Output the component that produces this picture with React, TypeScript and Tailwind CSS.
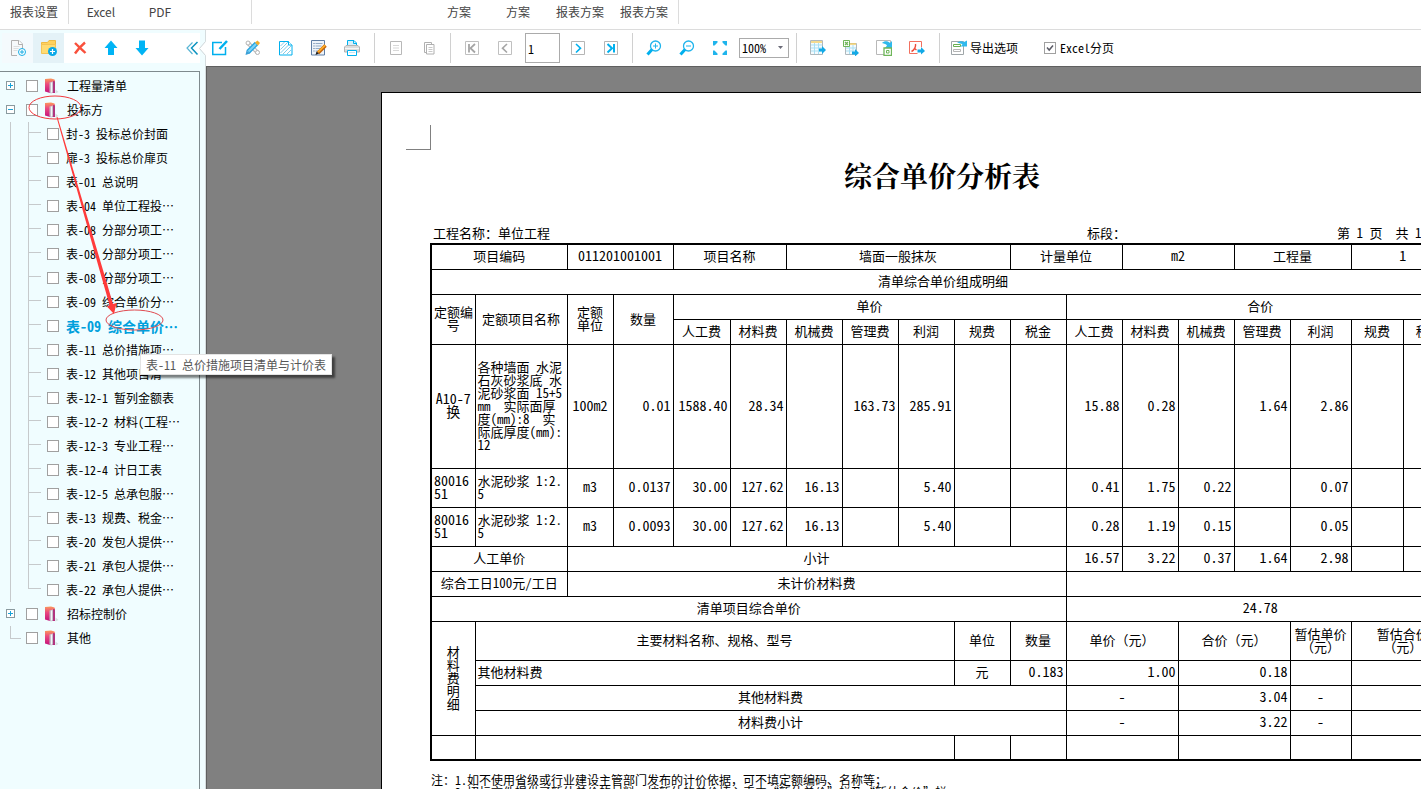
import { useState } from 'react'
import type { ReactNode } from 'react'
import { clsx } from 'clsx'

const sheets = [
  '封-3 投标总价封面',
  '扉-3 投标总价扉页',
  '表-01 总说明',
  '表-04 单位工程投⋯',
  '表-08 分部分项工⋯',
  '表-08 分部分项工⋯',
  '表-08 分部分项工⋯',
  '表-09 综合单价分⋯',
  '表-09 综合单价⋯',
  '表-11 总价措施项⋯',
  '表-12 其他项目清⋯',
  '表-12-1 暂列金额表',
  '表-12-2 材料(工程⋯',
  '表-12-3 专业工程⋯',
  '表-12-4 计日工表',
  '表-12-5 总承包服⋯',
  '表-13 规费、税金⋯',
  '表-20 发包人提供⋯',
  '表-21 承包人提供⋯',
  '表-22 承包人提供⋯',
]

const columns = [44, 92, 46, 60, 57, 56, 56, 56, 56, 56, 56, 56, 56, 56, 56, 61, 52, 52]

const feeNames = ['人工费', '材料费', '机械费', '管理费', '利润', '规费', '税金']

const quotaName = `各种墙面 水泥
石灰砂浆底 水
泥砂浆面 15+5
mm  实际面厚
度(mm):8  实
际底厚度(mm):
12`

/* ---------- icons ---------- */

function Icon({ children }: { children: ReactNode }) {
  return (
    <svg className="block size-4 shrink-0" viewBox="0 0 16 16" fill="none" aria-hidden="true">
      {children}
    </svg>
  )
}

const NewFileIcon = () => (
  <Icon>
    <path d="M1.500.5h7.500l3.500 3.500v5M7 15.500H1.500V.5" fill="#f8f8f8" stroke="#b0b0b0" />
    <path d="M8.500.5v4h4" fill="#fff" stroke="#b0b0b0" />
    <path d="M3.500 6.500h6M3.500 8.500h5M3.500 10.500h4" stroke="#dedede" />
    <circle cx="12" cy="12" r="3.500" fill="#fff" stroke="#1aaee5" />
    <path d="M12 10v4M10 12h4" stroke="#1aaee5" />
  </Icon>
)

const NewFolderIcon = () => (
  <Icon>
    <path d="M.5 13V2.500h6L8 .5h6.500V9" fill="#ffd25e" stroke="#eebb45" />
    <path d="M.5 13.500V4.500h14v9z" fill="#ffdc73" stroke="#f4c456" />
    <circle cx="11.500" cy="11.500" r="4.500" fill="#09a9e8" />
    <path d="M11.500 9v5M9 11.500h5" stroke="#fff" strokeWidth="1.200" />
  </Icon>
)

const DeleteIcon = () => (
  <Icon>
    <path d="M3 3c3 3 6.500 6 10.500 10M13 2.500C9.500 5.500 6 9 3 13.500" stroke="#f9503c" strokeWidth="2.400" />
  </Icon>
)

const UpIcon = () => (
  <Icon>
    <path d="M8 .5L14.500 8H11v7H5V8H1.500z" fill="#00b4f5" />
  </Icon>
)

const DownIcon = () => (
  <Icon>
    <path d="M8 15.500L1.500 8H5V.5h6V8h3.500z" fill="#00b4f5" />
  </Icon>
)

const CollapseIcon = () => (
  <Icon>
    <path d="M8.500 2.500L3 8l5.500 6" stroke="#59b5d4" strokeWidth="1.200" />
    <path d="M13.500 2L7.500 8l6 6.500" stroke="#0d93c0" strokeWidth="1.500" />
  </Icon>
)

const FolderIcon = () => (
  <Icon>
    <defs>
      <linearGradient id="cover" x1="0" y1="0" x2="0" y2="1">
        <stop offset="0" stopColor="#fb9a5c" />
        <stop offset="0.4" stopColor="#ea4a80" />
        <stop offset="1" stopColor="#c4127c" />
      </linearGradient>
    </defs>
    <path d="M0 1L6 .5l3.500 1L10 3v12H5L0 13.500z" fill="url(#cover)" />
    <path d="M4.500 4.500L8 3.500v11L6 15.500l-1.500-1z" fill="#c5c0cb" />
    <path d="M6.500 4.500v10" stroke="#f7f5f8" />
    <path d="M8 3l2 .5v11L8 15z" fill="#b0357f" />
    <path d="M10.500 11.500l3 2.500-3 1.500z" fill="#d5dee1" />
  </Icon>
)

const EditIcon = () => (
  <Icon>
    <path d="M10 2.500H.75V14.500H13.500V7" stroke="#00b0ee" strokeWidth="1.500" />
    <path d="M15 1L7.500 9" stroke="#00b0ee" strokeWidth="2.500" />
  </Icon>
)

const DesignIcon = () => (
  <Icon>
    <path d="M2.500 2.500l10.500 10.500" stroke="#b4b4b4" strokeWidth="4" />
    <path d="M3 3l9.500 9.500" stroke="#f4f4f4" strokeWidth="2" />
    <circle cx="3" cy="3" r="2" fill="#fff" stroke="#b4b4b4" />
    <circle cx="12.500" cy="12.500" r="2" fill="#fff" stroke="#b4b4b4" />
    <path d="M11.500 3.500L3 12" stroke="#2aa5e0" strokeWidth="4.600" />
    <path d="M11 4L3.500 11.500" stroke="#7fd2f5" strokeWidth="2" />
    <path d="M10 2.500L12.500.5l2.500 2.500-2 2.500z" fill="#f5ad2e" />
    <path d="M1.500 10.500L.5 15l4.500-1.500z" fill="#3b9fd6" />
  </Icon>
)

const HatchIcon = () => (
  <Icon>
    <path d="M1.500 1.500h9l3.500 3.500v10H1.500z" fill="#fff" stroke="#00b0ee" />
    <path d="M2.500 6l4-4M2.500 9.500L10 2M2.500 13l9-9M5 14l8-8M9 14l4-4" stroke="#83cdea" />
    <path d="M10.500 1.500v3.500h3.500" fill="#fff" stroke="#00b0ee" />
  </Icon>
)

const NoteIcon = () => (
  <Icon>
    <path d="M.5.5h13v14.500H.5z" fill="#eef4fa" stroke="#5f7ea5" />
    <path d="M2.500 3.500h1M2.500 6h1M2.500 8.500h1M2.500 11h1" stroke="#4f6d94" />
    <path d="M4.500 3.500h7M4.500 6h6M4.500 8.500h5M4.500 11h3" stroke="#93abc6" />
    <path d="M14.500 5.500L7 13" stroke="#c2620c" strokeWidth="3.500" />
    <path d="M14.300 5.200L7 12.200" stroke="#ffae27" strokeWidth="1.800" />
    <path d="M5.500 11.500l2.500 2L4.500 15z" fill="#222" />
  </Icon>
)

const PrintIcon = () => (
  <Icon>
    <path d="M3.500 6.500V.5h6.500l2.500 2.500v3.500" fill="#d7f1fb" stroke="#00b0ee" />
    <path d="M9.500.5v3h3" stroke="#00b0ee" />
    <path d="M2 5.500h12l1.500 1.500v5H.5V7z" fill="#dcdcdc" stroke="#b4b4b4" />
    <path d="M1 8.500h14" stroke="#f6f6f6" />
    <path d="M3.500 10.500h9v5h-9z" fill="#fff" stroke="#00b0ee" />
    <path d="M5 12.500h6" stroke="#bfe6f5" />
  </Icon>
)

const PageIcon = () => (
  <Icon>
    <path d="M2.500 1.500h11v13h-11z" fill="#fff" stroke="#b8b8b8" />
    <path d="M5 5.500h6M5 8h6M5 10.500h6" stroke="#d8d8d8" />
  </Icon>
)

const CopyIcon = () => (
  <Icon>
    <path d="M5.500 12.500h-2v-10h7v2" stroke="#b0b0b0" />
    <path d="M5.500 4.500h7.500v9.500H5.500z" fill="#fff" stroke="#b0b0b0" />
    <path d="M7.500 7.500h4M7.500 9.500h4M7.500 11.500h4" stroke="#c8c8c8" />
  </Icon>
)

const FirstIcon = () => (
  <Icon>
    <path d="M1.500 1.500h13v13h-13z" stroke="#c0c0c0" />
    <path d="M5 4v8.500" stroke="#a5a5a5" strokeWidth="1.800" />
    <path d="M11 4L6.500 8.200 11 12.500" stroke="#a5a5a5" strokeWidth="1.800" />
  </Icon>
)

const PrevIcon = () => (
  <Icon>
    <path d="M1.500 1.500h13v13h-13z" stroke="#c0c0c0" />
    <path d="M10 4L5.500 8.200 10 12.500" stroke="#a5a5a5" strokeWidth="1.600" />
  </Icon>
)

const NextIcon = () => (
  <Icon>
    <path d="M1.500 1.500h13v13h-13z" stroke="#b5b5b5" />
    <path d="M6 4l4.500 4.200L6 12.500" stroke="#00b0ee" strokeWidth="1.600" />
  </Icon>
)

const LastIcon = () => (
  <Icon>
    <path d="M1.500 1.500h13v13h-13z" stroke="#b5b5b5" />
    <path d="M4.500 4L9 8.200 4.500 12.500M11 4v8.500" stroke="#00b0ee" strokeWidth="2" />
  </Icon>
)

const ZoomInIcon = () => (
  <Icon>
    <circle cx="9.500" cy="6" r="5" stroke="#1fb4ec" strokeWidth="1.300" />
    <path d="M9.500 3.500v5M7 6h5" stroke="#1fb4ec" />
    <path d="M6 9.500L1.500 14.500" stroke="#00b0ee" strokeWidth="3" />
  </Icon>
)

const ZoomOutIcon = () => (
  <Icon>
    <circle cx="9.500" cy="6" r="5" stroke="#1fb4ec" strokeWidth="1.300" />
    <path d="M7 6h5" stroke="#1fb4ec" />
    <path d="M6 9.500L1.500 14.500" stroke="#00b0ee" strokeWidth="3" />
  </Icon>
)

const FitIcon = () => (
  <Icon>
    <path
      d="M1 1h4.500v1.500L2.500 5.500H1zM15 1h-4.500v1.500l3 3H15zM1 15h4.500v-1.500l-3-3H1zM15 15h-4.500v-1.500l3-3H15z"
      fill="#1fb4ec"
    />
  </Icon>
)

const ExportTableIcon = () => (
  <Icon>
    <path d="M.5.5h12v14H.5z" fill="#f4fbfe" stroke="#b0b8bc" />
    <path d="M1 2h11" stroke="#f5cf6a" strokeWidth="1.500" />
    <path d="M1 5h11M1 8h11M1 11h11M4.500 3v11M8.500 3v11" stroke="#a9dff3" />
    <path d="M9 8.500h3V6l4 4-4 4v-2.500H9z" fill="#12a9e6" />
  </Icon>
)

const ExportExcelIcon = () => (
  <Icon>
    <path d="M2.500 3.500h11v11h-11z" fill="#f4fbfe" stroke="#b0b8bc" />
    <path d="M7 4h6" stroke="#f5cf6a" strokeWidth="1.500" />
    <path d="M3 8h10M3 11h10M6.500 5v9M10 5v9" stroke="#a9dff3" />
    <path d="M.5.500h6v6h-6z" fill="#fff" stroke="#6fb65a" />
    <path d="M2 2l3 3M5 2L2 5" stroke="#6fb65a" strokeWidth="1.300" />
    <path d="M9 11.500h3V9l4 4-4 3.500V14.500H9z" fill="#12a9e6" />
  </Icon>
)

const ExportBatchIcon = () => (
  <Icon>
    <path d="M.5.500h14v14H.5z" fill="#fff" stroke="#b8b8b8" />
    <path d="M6 3c2-2.500 6-2.500 8 0l2-2v7H9l2-2.500C10 4 8.500 3.500 6 3z" fill="#2fb9ec" />
    <path d="M8 8h7.500v7.500H8z" fill="#fff" stroke="#6fb65a" strokeWidth="1.300" />
    <path d="M10.500 10.500h2.500v2.500h-2.500z" stroke="#6fb65a" />
  </Icon>
)

const ExportPdfIcon = () => (
  <Icon>
    <path d="M12.500 7V1.500H.5v12h8" stroke="#f2705f" />
    <path d="M2.500 11.500c3-1.500 4.500-5 4-7.500M5.500 8.500l2 1.500" stroke="#ee4b3a" strokeWidth="1.400" />
    <path d="M8.500 9.500h3.500V7l4 4-4 3.500V12.500H8.500z" fill="#12a9e6" />
  </Icon>
)

const ExportOptionsIcon = () => (
  <Icon>
    <path d="M.5 1.500h12v13H.5z" fill="#fff" stroke="#9fa6a9" />
    <path d="M2.500 4.500h7v2h-7z" stroke="#69ae52" />
    <path d="M2.500 9.500h7v2h-7z" stroke="#b5b5b5" />
    <path d="M6 3c2.500-2.500 5.500-2 7-1l3-1.500V6.500H9.500L11.500 4.500C10 3.500 8.500 3 6 3z" fill="#2fb9ec" />
  </Icon>
)

/* ---------- ribbon and toolbar ---------- */

function RibbonButton({ className, children }: { className: string; children: ReactNode }) {
  return <button className={clsx('h-6 text-center text-[12px] leading-6 text-[#444]', className)}>{children}</button>
}

function Ribbon() {
  return (
    <div className="flex h-[30px] shrink-0 items-start border-b border-[#dcdcdc] bg-white">
      <RibbonButton className="w-[68px]">报表设置</RibbonButton>
      <span className="h-6 w-px bg-[#dcdcdc]" />
      <RibbonButton className="w-16">Excel</RibbonButton>
      <RibbonButton className="w-[54px]">PDF</RibbonButton>
      <span className="ml-16 h-6 w-px bg-[#dcdcdc]" />
      <RibbonButton className="ml-[178px] w-[58px]">方案</RibbonButton>
      <RibbonButton className="w-[60px]">方案</RibbonButton>
      <RibbonButton className="w-16">报表方案</RibbonButton>
      <RibbonButton className="w-16">报表方案</RibbonButton>
      <span className="ml-0.5 h-6 w-px bg-[#dcdcdc]" />
    </div>
  )
}

function ToolButton({ label, children }: { label: string; children: ReactNode }) {
  return (
    <button aria-label={label} className="size-4 shrink-0">
      {children}
    </button>
  )
}

const Divider = () => <span className="h-[30px] w-px shrink-0 bg-[#d0d0d0]" />

function Toolbar() {
  const [page, setPage] = useState('1')
  const [paged, setPaged] = useState(true)

  return (
    <div className="flex h-9 shrink-0 items-center bg-white pl-1.5 [font-feature-settings:'hwid']">
      <div className="mr-3.5 flex gap-[17px]">
        <ToolButton label="编辑"><EditIcon /></ToolButton>
        <ToolButton label="设计"><DesignIcon /></ToolButton>
        <ToolButton label="背景"><HatchIcon /></ToolButton>
        <ToolButton label="备注"><NoteIcon /></ToolButton>
        <ToolButton label="打印"><PrintIcon /></ToolButton>
      </div>
      <Divider />
      <div className="mx-[13px] flex gap-[17px]">
        <ToolButton label="单页"><PageIcon /></ToolButton>
        <ToolButton label="多页"><CopyIcon /></ToolButton>
      </div>
      <Divider />
      <div className="mr-3 ml-[13px] flex items-center gap-[17px]">
        <ToolButton label="首页"><FirstIcon /></ToolButton>
        <ToolButton label="上一页"><PrevIcon /></ToolButton>
      </div>
      <input
        aria-label="页码"
        value={page}
        onChange={(e) => setPage(e.target.value)}
        className="h-[30px] w-[35px] border border-[#ababab] px-0.5 text-[12px] text-black"
      />
      <div className="mr-[13px] ml-2.5 flex gap-[17px]">
        <ToolButton label="下一页"><NextIcon /></ToolButton>
        <ToolButton label="末页"><LastIcon /></ToolButton>
      </div>
      <Divider />
      <div className="mr-[11px] ml-[13px] flex gap-[17px]">
        <ToolButton label="放大"><ZoomInIcon /></ToolButton>
        <ToolButton label="缩小"><ZoomOutIcon /></ToolButton>
        <ToolButton label="适应"><FitIcon /></ToolButton>
      </div>
      <div className="relative mr-[7px]">
        <select
          aria-label="缩放比例"
          className="block h-5 w-[50px] appearance-none border border-[#ababab] bg-white pl-0.5 text-[12px] text-black"
        >
          <option>100%</option>
        </select>
        <svg className="pointer-events-none absolute top-2 right-1.5" width="5" height="4" aria-hidden="true">
          <path d="M0 0h5L2.500 3z" fill="#6b6b78" />
        </svg>
      </div>
      <Divider />
      <div className="mr-3.5 ml-[13px] flex gap-[17px]">
        <ToolButton label="导出表格"><ExportTableIcon /></ToolButton>
        <ToolButton label="导出Excel"><ExportExcelIcon /></ToolButton>
        <ToolButton label="批量导出"><ExportBatchIcon /></ToolButton>
        <ToolButton label="导出PDF"><ExportPdfIcon /></ToolButton>
      </div>
      <Divider />
      <button className="ml-[11px] flex shrink-0 items-center gap-[3px] text-[12px] text-black">
        <ExportOptionsIcon />
        导出选项
      </button>
      <label className="ml-[26px] flex shrink-0 items-center gap-1 text-[12px] text-black">
        <span className="grid size-3 place-items-center">
          <input
            type="checkbox"
            checked={paged}
            onChange={() => setPaged(!paged)}
            className="col-start-1 row-start-1 size-3 appearance-none border border-[#a0a0a0] bg-white"
          />
          {paged && (
            <svg className="pointer-events-none col-start-1 row-start-1" width="8" height="8" fill="none">
              <path d="M1 3.500l2.200 2.500L7 1.500" stroke="#5b5b66" strokeWidth="1.500" />
            </svg>
          )}
        </span>
        Excel分页
      </label>
    </div>
  )
}

/* ---------- sidebar ---------- */

const Box = () => (
  <input type="checkbox" className="size-3 shrink-0 appearance-none border border-[#a0a0a0] bg-white" />
)

function RootRow({ name, state }: { name: string; state: 'open' | 'closed' | 'leaf' }) {
  return (
    <div className="flex h-6 items-center pl-1.5">
      {state === 'leaf' ? (
        <span className="mr-[5px] ml-1 h-6 w-[11px]">
          <span className="block h-[13px] border-b border-l border-[#c6cacc]" />
        </span>
      ) : (
        <button aria-label={name} className="mr-[11px] mb-0.5 size-[9px] bg-white outline outline-1 -outline-offset-1 outline-[#8a9a9f]">
          <svg className="block" width="9" height="9" aria-hidden="true">
            <path d={state === 'open' ? 'M2 4.500h5' : 'M2 4.500h5M4.500 2v5'} stroke="#1aa3d8" />
          </svg>
        </button>
      )}
      <label className="flex items-center text-[12px] leading-6 whitespace-nowrap text-black">
        <Box />
        <span className="mr-1.5 ml-[7px]">
          <FolderIcon />
        </span>
        {name}
      </label>
    </div>
  )
}

function SheetRow({ name, selected, last }: { name: string; selected: boolean; last: boolean }) {
  return (
    <li className="flex h-6 pl-2.5">
      <span className="w-[18px] shrink-0 border-l border-[#c6cacc]" />
      <span className="mr-1.5 w-[13px] shrink-0">
        <span className="block h-[11px] border-b border-l border-[#c6cacc]" />
        {!last && <span className="block h-[13px] border-l border-[#c6cacc]" />}
      </span>
      <label
        className={clsx(
          'flex items-center gap-[7px] leading-6 whitespace-nowrap',
          selected ? 'text-[14px] font-bold text-[#00a0dc]' : 'text-[12px] text-black',
        )}
      >
        <Box />
        {name}
      </label>
    </li>
  )
}

function Sidebar() {
  return (
    <aside className="relative flex w-[206px] shrink-0 flex-col border-r border-[#d5dcde] bg-[#f0fdff]">
      <div className="mt-[3px] mr-[5px] ml-0.5 flex h-[30px] shrink-0 items-center bg-white">
        <button aria-label="新建报表" className="grid h-full w-[31px] place-items-center bg-[#f4fafd]"><NewFileIcon /></button>
        <button aria-label="新建文件夹" className="grid h-full w-[31px] place-items-center bg-[#e4f2f7]"><NewFolderIcon /></button>
        <button aria-label="删除" className="grid h-full w-[31px] place-items-center"><DeleteIcon /></button>
        <button aria-label="上移" className="grid h-full w-[31px] place-items-center"><UpIcon /></button>
        <button aria-label="下移" className="grid h-full w-[31px] place-items-center"><DownIcon /></button>
        <button aria-label="收起" className="ml-auto h-4"><CollapseIcon /></button>
      </div>
      <svg className="absolute top-[11px] -right-px" width="7" height="15" aria-hidden="true">
        <path d="M7 0L.5 7.500 7 15z" fill="#fff" />
        <path d="M6.500.5L.5 7.500l6 7" fill="none" stroke="#cfd6d8" />
      </svg>
      <nav className="mt-2 mr-[5px] flex-1 border border-b-0 border-[#7f8a8e] pt-0.5 -ml-px [font-feature-settings:'hwid']">
        <RootRow name="工程量清单" state="closed" />
        <RootRow name="投标方" state="open" />
        <ul>
          {sheets.map((name, index) => (
            <SheetRow key={index} name={name} selected={index === 8} last={index === sheets.length - 1} />
          ))}
        </ul>
        <RootRow name="招标控制价" state="closed" />
        <RootRow name="其他" state="leaf" />
      </nav>
    </aside>
  )
}

/* ---------- report ---------- */

interface CellProps {
  span?: number;
  rows?: number;
  align?: 'left' | 'center' | 'right';
  num?: boolean;
  mixed?: boolean;
  children?: ReactNode;
}

function Cell({ span, rows, align = 'center', num, mixed, children }: CellProps) {
  return (
    <td
      colSpan={span}
      rowSpan={rows}
      className={clsx(
        'border border-black px-0.5 pt-0 pb-0.5 align-middle leading-[13px] whitespace-pre',
        align === 'left' && 'text-left',
        align === 'center' && 'text-center',
        align === 'right' && 'text-right',
        num ? 'text-[14px]' : 'text-[13px]',
        (num || mixed) && "[font-feature-settings:'hwid']",
      )}
    >
      {children}
    </td>
  )
}

function Amounts({ values }: { values: string[] }) {
  return (
    <>
      {values.map((value, index) => (
        <Cell key={index} align="right" num>{value}</Cell>
      ))}
    </>
  )
}

function AnalysisTable() {
  return (
    <table className="w-[1024px] table-fixed border-collapse border-2 border-black text-black">
      <colgroup>
        {columns.map((width, index) => (
          <col key={index} style={{ width }} />
        ))}
      </colgroup>
      <tbody>
        <tr className="h-[25px]">
          <Cell span={2}>项目编码</Cell>
          <Cell span={2} num>011201001001</Cell>
          <Cell span={2}>项目名称</Cell>
          <Cell span={4}>墙面一般抹灰</Cell>
          <Cell span={2}>计量单位</Cell>
          <Cell span={2} num>m2</Cell>
          <Cell span={2}>工程量</Cell>
          <Cell span={2} num>1</Cell>
        </tr>
        <tr className="h-[25px]">
          <Cell span={18}>清单综合单价组成明细</Cell>
        </tr>
        <tr className="h-[25px]">
          <Cell rows={2}>{'定额编\n号'}</Cell>
          <Cell rows={2}>定额项目名称</Cell>
          <Cell rows={2}>{'定额\n单位'}</Cell>
          <Cell rows={2}>数量</Cell>
          <Cell span={7}>单价</Cell>
          <Cell span={7}>合价</Cell>
        </tr>
        <tr className="h-[25px]">
          {[...feeNames, ...feeNames].map((name, index) => (
            <Cell key={index}>{name}</Cell>
          ))}
        </tr>
        <tr className="h-[124px]">
          <Cell num>{'A10-7\n换'}</Cell>
          <Cell align="left" mixed>{quotaName}</Cell>
          <Cell num>100m2</Cell>
          <Amounts values={['0.01', '1588.40', '28.34', '', '163.73', '285.91', '', '', '15.88', '0.28', '', '1.64', '2.86', '', '']} />
        </tr>
        <tr className="h-[39px]">
          <Cell align="left" num>{'80016\n51'}</Cell>
          <Cell align="left" mixed>{'水泥砂浆 1:2.\n5'}</Cell>
          <Cell num>m3</Cell>
          <Amounts values={['0.0137', '30.00', '127.62', '16.13', '', '5.40', '', '', '0.41', '1.75', '0.22', '', '0.07', '', '']} />
        </tr>
        <tr className="h-[39px]">
          <Cell align="left" num>{'80016\n51'}</Cell>
          <Cell align="left" mixed>{'水泥砂浆 1:2.\n5'}</Cell>
          <Cell num>m3</Cell>
          <Amounts values={['0.0093', '30.00', '127.62', '16.13', '', '5.40', '', '', '0.28', '1.19', '0.15', '', '0.05', '', '']} />
        </tr>
        <tr className="h-[25px]">
          <Cell span={2}>人工单价</Cell>
          <Cell span={9}>小计</Cell>
          <Amounts values={['16.57', '3.22', '0.37', '1.64', '2.98', '', '']} />
        </tr>
        <tr className="h-[25px]">
          <Cell span={2} mixed>综合工日100元/工日</Cell>
          <Cell span={9}>未计价材料费</Cell>
          <Cell span={7} />
        </tr>
        <tr className="h-[25px]">
          <Cell span={11}>清单项目综合单价</Cell>
          <Cell span={7} num>24.78</Cell>
        </tr>
        <tr className="h-[39px]">
          <Cell rows={4}>{'材\n料\n费\n明\n细'}</Cell>
          <Cell span={8}>主要材料名称、规格、型号</Cell>
          <Cell>单位</Cell>
          <Cell>数量</Cell>
          <Cell span={2}>单价（元）</Cell>
          <Cell span={2}>合价（元）</Cell>
          <Cell>{'暂估单价\n（元）'}</Cell>
          <Cell span={2}>{'暂估合价\n（元）'}</Cell>
        </tr>
        <tr className="h-[25px]">
          <Cell span={8} align="left">其他材料费</Cell>
          <Cell>元</Cell>
          <Cell align="right" num>0.183</Cell>
          <Cell span={2} align="right" num>1.00</Cell>
          <Cell span={2} align="right" num>0.18</Cell>
          <Cell />
          <Cell span={2} />
        </tr>
        <tr className="h-[25px]">
          <Cell span={10}>其他材料费</Cell>
          <Cell span={2} num>-</Cell>
          <Cell span={2} align="right" num>3.04</Cell>
          <Cell num>-</Cell>
          <Cell span={2} />
        </tr>
        <tr className="h-[25px]">
          <Cell span={10}>材料费小计</Cell>
          <Cell span={2} num>-</Cell>
          <Cell span={2} align="right" num>3.22</Cell>
          <Cell num>-</Cell>
          <Cell span={2} />
        </tr>
        <tr className="h-[25px]">
          <Cell />
          <Cell span={8} />
          <Cell />
          <Cell />
          <Cell span={2} />
          <Cell span={2} />
          <Cell />
          <Cell span={2} />
        </tr>
      </tbody>
    </table>
  )
}

function Report() {
  return (
    <div className="h-[1600px] w-[1124px] border border-black bg-white pt-8 pl-12 text-black">
      {/* margin corner mark */}
      <div className="-ml-6 h-[25px] w-[25px] border-r border-b border-[#808080]" />
      <h1 className="mt-[5px] w-[1024px] text-center font-['Noto_Serif_CJK_SC','Noto_Sans_CJK_SC',sans-serif] text-[28px] leading-10 font-bold">
        综合单价分析表
      </h1>
      <div className="mt-7 flex h-5 w-[1024px] items-center pl-[3px] text-[13px] leading-5 whitespace-pre">
        <span className="w-[654px]">工程名称：单位工程</span>
        <span className="w-[250px]">标段：</span>
        <span className="[font-feature-settings:'hwid']">第 1 页  共 1 页</span>
      </div>
      <AnalysisTable />
      <div className="mt-[13px] flex pl-px text-[12px] leading-[12px] whitespace-nowrap">
        <span>注：</span>
        <ol>
          <li>
            <span className="[font-feature-settings:'hwid']">1.</span>
            如不使用省级或行业建设主管部门发布的计价依据，可不填定额编码、名称等；
          </li>
          <li>
            <span className="[font-feature-settings:'hwid']">2.</span>
            招标文件提供了暂估单价的材料，按暂估的单价填入表内“暂估单价”栏及“暂估合价”栏。
          </li>
        </ol>
      </div>
    </div>
  )
}

/* red ellipses and the arrow that joins them */
function Marks() {
  return (
    <svg className="pointer-events-none absolute top-0 left-0" width="206" height="340" fill="none" aria-hidden="true">
      <ellipse cx="55" cy="107.500" rx="26" ry="11.500" stroke="#f2383c" />
      <ellipse cx="134.500" cy="320" rx="28.500" ry="10" stroke="#e04a50" />
      <path d="M56.500 117L57.500 117 103 270 113 304 116.500 303 114 314 107 306.500 109.500 305 99.500 270z" fill="#ff3b3b" />
    </svg>
  )
}

export default function App() {
  return (
    <div
      lang="zh-CN"
      className="relative flex h-screen flex-col overflow-hidden bg-white font-['Noto_Sans_CJK_SC',sans-serif]"
    >
      <Ribbon />
      <div className="flex min-h-0 flex-1">
        <Sidebar />
        <main className="flex min-w-0 flex-1 flex-col">
          <Toolbar />
          <div className="flex-1 overflow-hidden border-t border-l border-[#5f5f5f] bg-[#808080] pt-[25px] pl-[174px]">
            <Report />
          </div>
        </main>
      </div>
      <Marks />
      <div
        role="tooltip"
        className="absolute top-[354px] left-[140px] h-[21px] border border-[#e3e3e3] bg-white px-[5px] text-[12px] leading-[19px] text-[#575757] shadow-[3px_3px_2px_rgba(0,0,0,0.5)] [font-feature-settings:'hwid']"
      >
        表-11 总价措施项目清单与计价表
      </div>
    </div>
  )
}
